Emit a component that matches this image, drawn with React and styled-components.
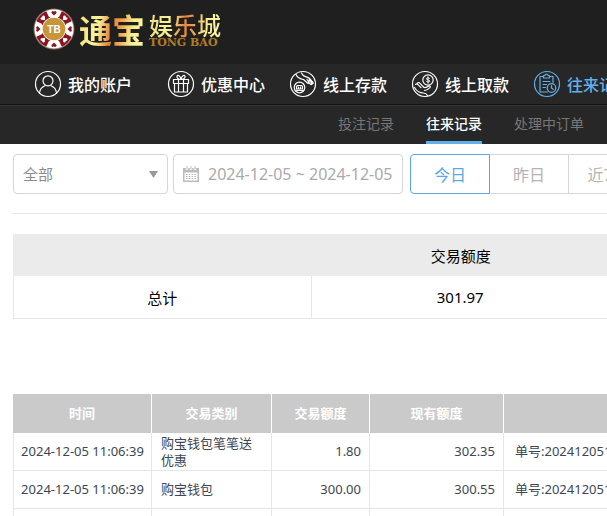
import React, { useState } from 'react'
import styled, { createGlobalStyle } from 'styled-components'

const GlobalStyle = createGlobalStyle`
    * {
        box-sizing: border-box;
    }

    body {
        margin: 0;
        background-color: #fff;
        color: #000;
        font-family: "Noto Sans", "Noto Sans CJK SC", sans-serif;
        overflow-x: hidden;
    }

    button, input, select {
        font-family: inherit;
    }
`

const Page = styled.div`
    overflow: hidden;
`

const Header = styled.header`
    display: flex;
    align-items: center;
    justify-content: space-between;
    height: 64px;
    padding: 0 0 6px 33px;
    background-color: #1f1f1f;
`

const Logo = styled.a`
    display: flex;
    align-items: center;
    gap: 4px;
    text-decoration: none;
    white-space: nowrap;
`

const GoldText = styled.span`
    font-family: "Noto Sans CJK SC", sans-serif;
    font-size: ${({ $size }) => $size}px;
    font-weight: ${({ $weight }) => $weight};
    line-height: ${({ $height }) => $height}px;
    color: transparent;
    background: linear-gradient(100deg, #f3e585 10%, #fbf49a 30%, #e8853a 48%, #ee9a4a 60%, #f9ee8c 78%, #fdf9b4);
    background-clip: text;
`

const LogoSide = styled.span`
    display: flex;
    flex-direction: column;
    padding-top: 2px;
`

const LogoLatin = styled.span`
    font-family: "DejaVu Serif", serif;
    font-size: 11px;
    font-weight: 700;
    line-height: 10px;
    color: #b07c26;
`

const Nav = styled.nav`
    display: flex;
    align-items: center;
    height: 41px;
    padding-left: 34px;
    background-color: #272727;
    border-bottom: 1px solid #111;
`

const NavLink = styled.a`
    display: flex;
    flex: none;
    align-items: center;
    gap: 6px;
    width: ${({ $wide }) => ($wide ? 133 : 122)}px;
    color: ${({ $active }) => ($active ? '#62b0ea' : '#fff')};
    font-size: 16px;
    font-weight: 500;
    line-height: 24px;
    text-decoration: none;
    white-space: nowrap;
`

const NavLabel = styled.span`
    padding-top: 2px;
`

const SubNav = styled.nav`
    display: flex;
    gap: 32px;
    height: 39px;
    padding-left: 338px;
    background-color: #272727;
    border-top: 1px solid #333;
`

const SubLink = styled.a`
    flex: none;
    border-bottom: 3px solid ${({ $active }) => ($active ? '#62b0ea' : 'transparent')};
    color: ${({ $active }) => ($active ? '#fff' : '#777')};
    font-size: 14px;
    font-weight: ${({ $active }) => ($active ? 500 : 400)};
    line-height: 35px;
    text-decoration: none;
    white-space: nowrap;
`

const Main = styled.main`
    padding: 10px 0 0 13px;
`

const Filters = styled.form`
    display: flex;
    padding-bottom: 19px;
    border-bottom: 1px solid #e6e6e6;
`

const SelectBox = styled.label`
    display: flex;
    flex: none;
    align-items: center;
    width: 155px;
    height: 40px;
    margin-right: 5px;
    padding-right: 9px;
    border: 1px solid #d6d6d6;
    border-radius: 4px;

    select {
        flex: 1;
        height: 38px;
        padding: 0 9px;
        border: 0;
        background: none;
        color: #8c8c8c;
        font-size: 15px;
        appearance: none;
    }
`

const DateBox = styled.label`
    display: flex;
    flex: none;
    align-items: center;
    gap: 9px;
    width: 230px;
    height: 40px;
    margin-right: 7px;
    padding-left: 9px;
    border: 1px solid #d6d6d6;
    border-radius: 4px;

    input {
        flex: 1;
        min-width: 0;
        padding: 0;
        border: 0;
        background: none;
        color: #aaa;
        font-size: 16px;
    }
`

const RangeButton = styled.button`
    flex: none;
    width: 80px;
    height: 40px;
    margin-right: -1px;
    padding: 0;
    border: 1px solid ${({ $active }) => ($active ? '#5aa9e6' : '#d6d6d6')};
    border-radius: ${({ $first }) => ($first ? '4px 0 0 4px' : '0')};
    background-color: #fff;
    color: ${({ $active }) => ($active ? '#5aa9e6' : '#b4b4b4')};
    font-size: 16px;
    z-index: ${({ $active }) => ($active ? 1 : 0)};
    cursor: pointer;
`

const Table = styled.table`
    width: 1194px;
    table-layout: fixed;
    border-collapse: separate;
    border-spacing: 0;
    white-space: nowrap;

    th, td {
        padding: 0;
        border: 0 solid #e6e6e6;
    }

    tbody th, tbody td {
        border-right-width: 1px;
        border-bottom-width: 1px;

        &:first-child {
            border-left-width: 1px;
        }
    }
`

const SummaryTable = styled(Table)`
    margin: 20px 0 75px;
    font-size: 15px;
    text-align: center;

    th, td {
        height: 43px;
        font-weight: 400;
    }

    thead th {
        height: 42px;
        background-color: #ebebeb;
    }
`

const RecordTable = styled(Table)`
    font-size: 13px;
    line-height: 17px;
    color: #3c4654;

    th {
        height: 39px;
        background-color: #cacaca;
        color: #fff;
        font-weight: 700;
        border-right: 1px solid #fff;
    }

    td {
        height: 38px;
    }
`

const TimeCell = styled.td`
    text-align: center;
`

const TypeCell = styled.td`
    && {
        padding: 0 9px;
    }
    white-space: normal;
`

const NumberCell = styled.td`
    && {
        padding: 0 8px;
    }
    text-align: right;
`

const NoteCell = styled.td`
    && {
        padding-left: 11px;
    }
`

function Chip() {
    const dots = [22, 67, 112, 157, 202, 247, 292, 337]
    return (
        <svg width="42" height="42" viewBox="0 0 42 42" aria-hidden="true">
            <circle cx="21" cy="21" r="20.500" fill="#8d7565" />
            <circle cx="21" cy="21" r="19.500" fill="#fff" />
            {[45, 135, 225, 315].map(a => (
                <g key={a} transform={`rotate(${a} 21 21)`}>
                    <path d="M14 3a19.500 19.500 0 0 1 14 0l-3 8.500h-8z" fill="#8a1420" />
                    <path d="M21 8.500l-2.500-3a1.400 1.400 0 0 1 2.500-1.200 1.400 1.400 0 0 1 2.500 1.200z" fill="#fff" />
                </g>
            ))}
            {[0, 90, 180, 270].map(a => (
                <path key={a} transform={`rotate(${a} 21 21)`} d="M21 7.500l-2.500-2.500a1.300 1.300 0 0 1 2.500-1 1.300 1.300 0 0 1 2.500 1z" fill="#8a1420" />
            ))}
            {dots.map(a => (
                <circle key={a} cx="21" cy="9" r=".8" fill="#8a1420" transform={`rotate(${a} 21 21)`} />
            ))}
            <circle cx="21" cy="21" r="12" fill="#fff" />
            <circle cx="21" cy="21" r="11.300" fill="#c8963a" />
            <text x="21" y="25" textAnchor="middle" fontFamily="Liberation Sans" fontWeight="700" fontSize="10" fill="#fff">TB</text>
        </svg>
    )
}

function CircleIcon({ children }) {
    return (
        <svg width="28" height="28" viewBox="0 0 28 28" fill="none" stroke="currentColor" strokeWidth="1.200" strokeLinecap="round" strokeLinejoin="round" aria-hidden="true">
            <circle cx="14" cy="14" r="12.500" />
            {children}
        </svg>
    )
}

const navItems = [
    {
        label: '我的账户',
        icon: <><circle cx="14" cy="10.800" r="5" /><path d="M5.500 23c.3-3.500 2.500-6 5.500-7.200M22.500 23c-.3-3.500-2.500-6-5.500-7.200" /></>
    },
    {
        label: '优惠中心',
        icon: <path d="M6.500 9.500h15v4h-15zM7.500 13.500h13V22h-13zM11.500 9.500V22M16.500 9.500V22M14 9.500c-2.500 0-4.500-1.500-4-3.300.6-1.800 3.500-.5 4 3.300zm0 0c2.500 0 4.500-1.500 4-3.300-.6-1.800-3.500-.5-4 3.300z" />
    },
    {
        label: '线上存款',
        icon: (
            <>
                <circle cx="10.500" cy="17.500" r="5.300" />
                <path d="M7.500 19v-2.500l1-1h4l1 1V19zM9.500 17v2M11.500 17v2M7.500 20.500h6" />
                <path d="M7 4.500c1.500 3.500 4 4.500 7.500 5l4 3.500c1.200.9 2.100-.2 1.300-1.200L18 9.500M19.500 12.500l2 1.800c1.100.8 2-.2 1.300-1.200L20 10M22.500 13.500c1.500.7 2-.2 1.500-1L20.500 8.500c-2-1.800-4.500-1.500-6.500-3.300L12.500 3" />
            </>
        )
    },
    {
        label: '线上取款',
        icon: (
            <>
                <circle cx="17" cy="10" r="5.200" />
                <path d="M18.700 8.500c-.4-1.100-3.300-1-3.300.3 0 1.500 3.400.8 3.400 2.300 0 1.300-3 1.400-3.500.1M17 6.800v6.400" strokeWidth="1" />
                <path d="M4.500 14.500c.8-1 1.800-.6 2.500.2l3 3M6.500 13c.8-.9 1.700-.5 2.300.2l4.200 4.300c2 .4 3.500-.5 4.800-1.400 1.300-.7 2 .6 1.100 1.600-1.600 1.700-3.300 2.700-5.400 2.800M3.500 17.500c2 3.500 5 5.500 9 5.500 2 0 3 .8 4 2.500" />
            </>
        )
    },
    {
        label: '往来记录',
        icon: <><path d="M9.500 6.500H7V22h7.500M17.500 6.500H20V12.500M10.500 5.500h1.500c0-2 3-2 3 0h1.500v2.500h-6zM10 11.500h7M10 14.500h3.500M10 17.500h2.500" /><circle cx="18.500" cy="18" r="4.300" /><path d="M18.500 15.500V18l1.800 1.300" /></>
    }
]

const records = [
    { time: '2024-12-05 11:06:39', type: '购宝钱包笔笔送优惠', amount: '1.80', balance: '302.35', note: '单号:202412051' },
    { time: '2024-12-05 11:06:39', type: '购宝钱包', amount: '300.00', balance: '300.55', note: '单号:202412051' },
    { time: '', type: '', amount: '', balance: '', note: '' }
]

export default function App() {
    const ranges = ['今日', '昨日', '近7日']
    const subItems = ['投注记录', '往来记录', '处理中订单']
    const [range, setRange] = useState(0)

    return (
        <Page>
            <GlobalStyle />
            <Header>
                <Logo href="#">
                    <Chip />
                    <GoldText $size={33} $weight={700} $height={44}>通宝</GoldText>
                    <LogoSide>
                        <GoldText $size={24} $weight={500} $height={26}>娱乐城</GoldText>
                        <LogoLatin>TONG BAO</LogoLatin>
                    </LogoSide>
                </Logo>
            </Header>
            <Nav>
                {
                    navItems.map((item, i) => (
                        <NavLink href="#" key={item.label} $wide={i === 0} $active={i === 4}>
                            <CircleIcon>{item.icon}</CircleIcon>
                            <NavLabel>{item.label}</NavLabel>
                        </NavLink>
                    ))
                }
            </Nav>
            <SubNav>
                {subItems.map((label, i) => <SubLink href="#" key={label} $active={i === 1}>{label}</SubLink>)}
            </SubNav>
            <Main>
                <Filters onSubmit={ev => ev.preventDefault()}>
                    <SelectBox>
                        <select aria-label="交易类别" defaultValue="all">
                            <option value="all">全部</option>
                        </select>
                        <svg width="9" height="7" viewBox="0 0 9 7" aria-hidden="true">
                            <path d="M0 0h9L4.500 7z" fill="#999" />
                        </svg>
                    </SelectBox>
                    <DateBox>
                        <svg width="16" height="16" viewBox="0 0 16 16" aria-hidden="true">
                            <path d="M0 2h16v14H0z" fill="#bbb" />
                            <path d="M1.500 6.500h13v8h-13z" fill="#fff" />
                            <path d="M4 0v4M8 0v4M12 0v4" stroke="#fff" strokeWidth="2.400" />
                            <path d="M4 0v3.500M8 0v3.500M12 0v3.500" stroke="#bbb" />
                            <path d="M3 8.500h10M3 10.500h10M3 12.500h10" stroke="#bbb" strokeDasharray="1.600 1.200" />
                        </svg>
                        <input type="text" aria-label="时间" defaultValue="2024-12-05 ~ 2024-12-05" />
                    </DateBox>
                    {
                        ranges.map((label, i) => (
                            <RangeButton type="button" key={label} $first={i === 0} $active={range === i} onClick={() => setRange(i)}>{label}</RangeButton>
                        ))
                    }
                </Filters>
                <SummaryTable>
                    <thead>
                        <tr><th></th><th>交易额度</th><th></th><th></th></tr>
                    </thead>
                    <tbody>
                        <tr><th scope="row">总计</th><td>301.97</td><td></td><td></td></tr>
                    </tbody>
                </SummaryTable>
                <RecordTable>
                    <colgroup>
                        <col width="139" />
                        <col width="120" />
                        <col width="98" />
                        <col width="134" />
                        <col />
                    </colgroup>
                    <thead>
                        <tr><th>时间</th><th>交易类别</th><th>交易额度</th><th>现有额度</th><th></th></tr>
                    </thead>
                    <tbody>
                        {
                            records.map((r, i) => (
                                <tr key={i}>
                                    <TimeCell>{r.time}</TimeCell>
                                    <TypeCell>{r.type}</TypeCell>
                                    <NumberCell>{r.amount}</NumberCell>
                                    <NumberCell>{r.balance}</NumberCell>
                                    <NoteCell>{r.note}</NoteCell>
                                </tr>
                            ))
                        }
                    </tbody>
                </RecordTable>
            </Main>
        </Page>
    )
}
